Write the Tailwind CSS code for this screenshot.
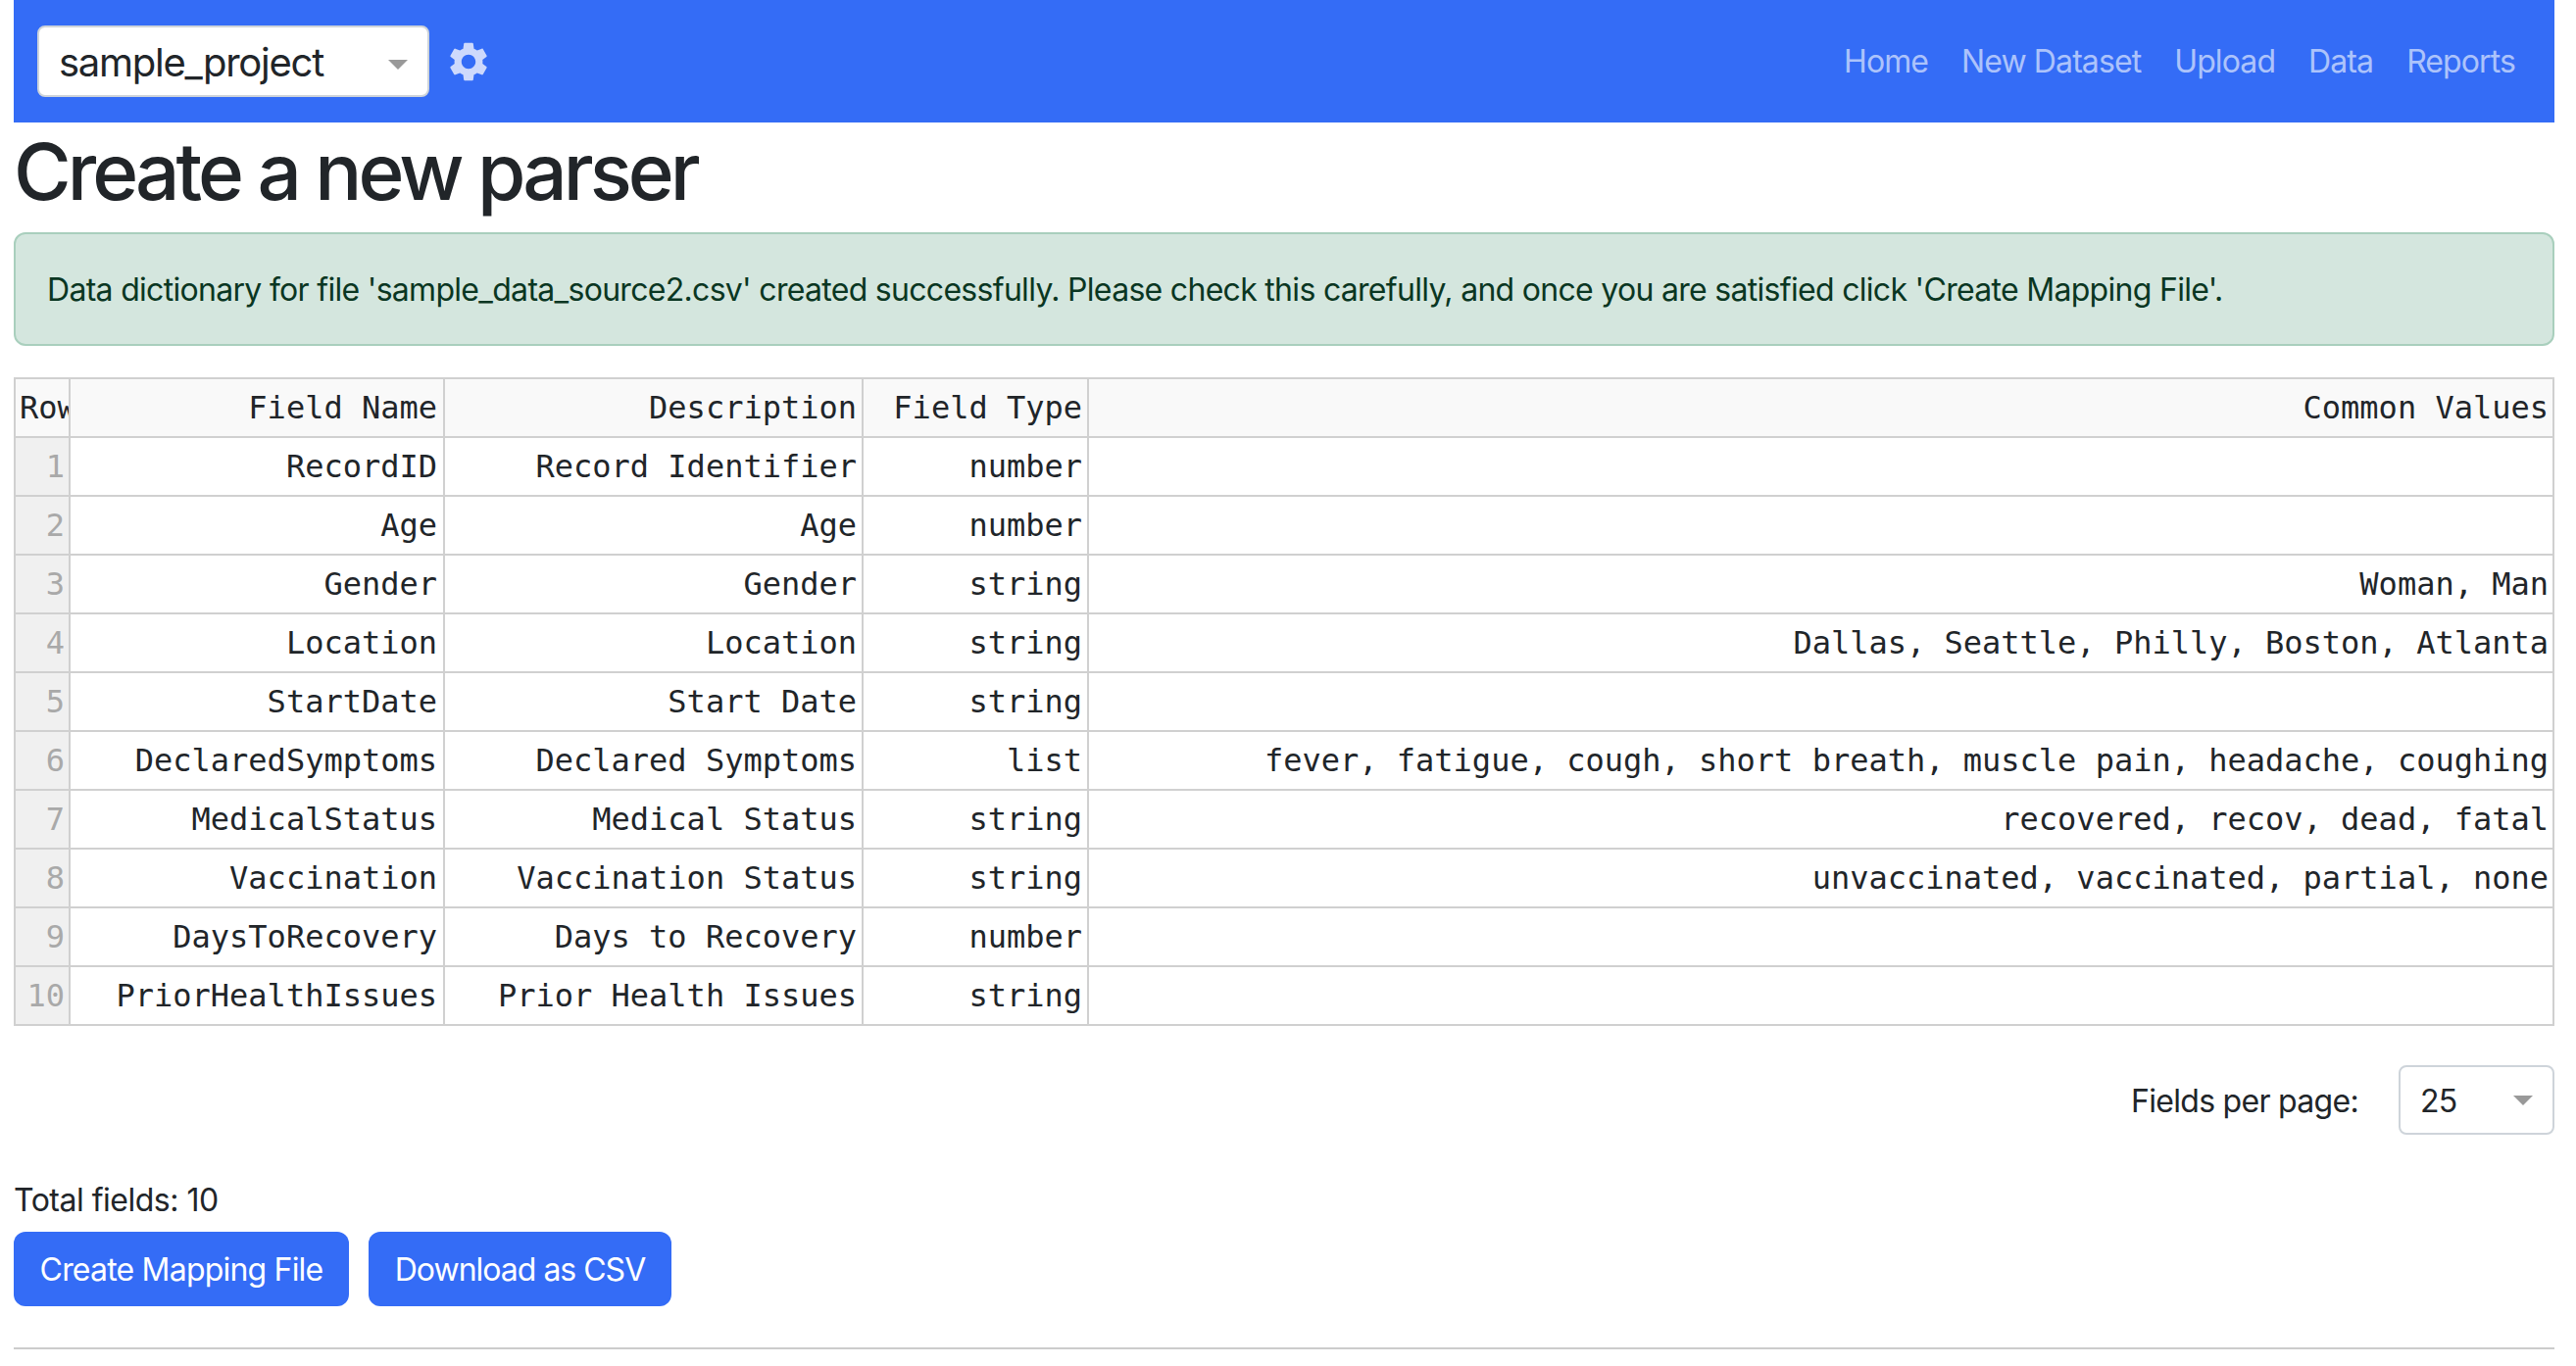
<!DOCTYPE html>
<html lang="en">
<head>
<meta charset="utf-8">
<title>Create a new parser</title>
<script src="https://cdn.jsdelivr.net/npm/@tailwindcss/browser@4"></script>
</head>
<body class="bg-white font-['Inter',sans-serif] text-[32px] leading-[48px] text-[#212529] tracking-[-0.7px]">
<div class="ml-[14px] mr-[22px]">
  <nav class="h-[125px] bg-[#346cf6] flex items-center pl-[24px] pr-[40px]">
    <div class="w-[400px] h-[73px] bg-white border-2 border-[#ced4da] rounded-[8px] flex items-center justify-between pl-[20px] pr-[20px] pt-[2px] text-[40px] tracking-[-1.25px] text-[#212529]">
      <span>sample_project</span>
      <svg class="w-[20px] h-[10px] mt-[4px]" viewBox="0 0 20 10"><polygon points="0,0 20,0 10,10" fill="#999999"/></svg>
    </div>
    <svg class="w-[48px] h-[48px] ml-[16px]" viewBox="0 0 24 24" fill="#cdd9fc"><path d="M19.14 12.94c.04-.3.06-.61.06-.94 0-.32-.02-.64-.07-.94l2.03-1.58c.18-.14.23-.41.12-.61l-1.92-3.32c-.12-.22-.37-.29-.59-.22l-2.39.96c-.5-.38-1.03-.7-1.62-.94l-.36-2.54c-.04-.24-.24-.41-.48-.41h-3.84c-.24 0-.43.17-.47.41l-.36 2.54c-.59.24-1.13.57-1.62.94l-2.39-.96c-.22-.08-.47 0-.59.22L2.74 8.87c-.12.21-.08.47.12.61l2.03 1.58c-.05.3-.09.63-.09.94s.02.64.07.94l-2.03 1.58c-.18.14-.23.41-.12.61l1.92 3.32c.12.22.37.29.59.22l2.39-.96c.5.38 1.03.7 1.62.94l.36 2.54c.05.24.24.41.48.41h3.84c.24 0 .44-.17.47-.41l.36-2.54c.59-.24 1.13-.56 1.62-.94l2.39.96c.22.08.47 0 .59-.22l1.92-3.32c.12-.22.07-.47-.12-.61l-2.01-1.58zM12 15.6c-1.98 0-3.6-1.62-3.6-3.6s1.62-3.6 3.6-3.6 3.6 1.62 3.6 3.6-1.62 3.6-3.6 3.6z"/></svg>
    <ul class="ml-auto flex gap-[34px] text-white/60 tracking-[-0.9px]">
      <li>Home</li>
      <li>New Dataset</li>
      <li>Upload</li>
      <li>Data</li>
      <li>Reports</li>
    </ul>
  </nav>

  <h1 class="text-[80px] leading-[96px] font-medium mt-[2px] mb-[14px] tracking-[-3.95px]">Create a new parser</h1>

  <div class="h-[116px] bg-[#d4e6de] border-2 border-[#a9cfbd] rounded-[12px] px-[32px] pt-[2px] flex items-center text-[#0a3622]">Data dictionary for file 'sample_data_source2.csv' created successfully. Please check this carefully, and once you are satisfied click 'Create Mapping File'.</div>

  <table class="mt-[32px] w-full table-fixed border-collapse font-['DejaVu_Sans_Mono',monospace] tracking-normal leading-[58px] text-right text-[#212529]">
    <colgroup><col class="w-[56px]"><col class="w-[382px]"><col class="w-[427px]"><col class="w-[230px]"><col></colgroup>
    <thead>
      <tr class="h-[60px] bg-[#f9f9f9]">
        <th class="font-normal border-2 border-[#d0d0d0] pl-[4px] text-left overflow-hidden whitespace-nowrap">Row</th>
        <th class="font-normal border-2 border-[#d0d0d0] pr-[6px]">Field Name</th>
        <th class="font-normal border-2 border-[#d0d0d0] pr-[5px]">Description</th>
        <th class="font-normal border-2 border-[#d0d0d0] pr-[5px]">Field Type</th>
        <th class="font-normal border-2 border-[#d0d0d0] pr-[4px]">Common Values</th>
      </tr>
    </thead>
    <tbody>
      <tr class="h-[60px]"><td class="border-2 border-[#d0d0d0] bg-[#f0f0f0] text-[#a9a9a9] pr-[4px]">1</td><td class="border-2 border-[#d0d0d0] pr-[6px]">RecordID</td><td class="border-2 border-[#d0d0d0] pr-[5px]">Record Identifier</td><td class="border-2 border-[#d0d0d0] pr-[5px]">number</td><td class="border-2 border-[#d0d0d0] pr-[4px]"></td></tr>
      <tr class="h-[60px]"><td class="border-2 border-[#d0d0d0] bg-[#f0f0f0] text-[#a9a9a9] pr-[4px]">2</td><td class="border-2 border-[#d0d0d0] pr-[6px]">Age</td><td class="border-2 border-[#d0d0d0] pr-[5px]">Age</td><td class="border-2 border-[#d0d0d0] pr-[5px]">number</td><td class="border-2 border-[#d0d0d0] pr-[4px]"></td></tr>
      <tr class="h-[60px]"><td class="border-2 border-[#d0d0d0] bg-[#f0f0f0] text-[#a9a9a9] pr-[4px]">3</td><td class="border-2 border-[#d0d0d0] pr-[6px]">Gender</td><td class="border-2 border-[#d0d0d0] pr-[5px]">Gender</td><td class="border-2 border-[#d0d0d0] pr-[5px]">string</td><td class="border-2 border-[#d0d0d0] pr-[4px]">Woman, Man</td></tr>
      <tr class="h-[60px]"><td class="border-2 border-[#d0d0d0] bg-[#f0f0f0] text-[#a9a9a9] pr-[4px]">4</td><td class="border-2 border-[#d0d0d0] pr-[6px]">Location</td><td class="border-2 border-[#d0d0d0] pr-[5px]">Location</td><td class="border-2 border-[#d0d0d0] pr-[5px]">string</td><td class="border-2 border-[#d0d0d0] pr-[4px]">Dallas, Seattle, Philly, Boston, Atlanta</td></tr>
      <tr class="h-[60px]"><td class="border-2 border-[#d0d0d0] bg-[#f0f0f0] text-[#a9a9a9] pr-[4px]">5</td><td class="border-2 border-[#d0d0d0] pr-[6px]">StartDate</td><td class="border-2 border-[#d0d0d0] pr-[5px]">Start Date</td><td class="border-2 border-[#d0d0d0] pr-[5px]">string</td><td class="border-2 border-[#d0d0d0] pr-[4px]"></td></tr>
      <tr class="h-[60px]"><td class="border-2 border-[#d0d0d0] bg-[#f0f0f0] text-[#a9a9a9] pr-[4px]">6</td><td class="border-2 border-[#d0d0d0] pr-[6px]">DeclaredSymptoms</td><td class="border-2 border-[#d0d0d0] pr-[5px]">Declared Symptoms</td><td class="border-2 border-[#d0d0d0] pr-[5px]">list</td><td class="border-2 border-[#d0d0d0] pr-[4px]">fever, fatigue, cough, short breath, muscle pain, headache, coughing</td></tr>
      <tr class="h-[60px]"><td class="border-2 border-[#d0d0d0] bg-[#f0f0f0] text-[#a9a9a9] pr-[4px]">7</td><td class="border-2 border-[#d0d0d0] pr-[6px]">MedicalStatus</td><td class="border-2 border-[#d0d0d0] pr-[5px]">Medical Status</td><td class="border-2 border-[#d0d0d0] pr-[5px]">string</td><td class="border-2 border-[#d0d0d0] pr-[4px]">recovered, recov, dead, fatal</td></tr>
      <tr class="h-[60px]"><td class="border-2 border-[#d0d0d0] bg-[#f0f0f0] text-[#a9a9a9] pr-[4px]">8</td><td class="border-2 border-[#d0d0d0] pr-[6px]">Vaccination</td><td class="border-2 border-[#d0d0d0] pr-[5px]">Vaccination Status</td><td class="border-2 border-[#d0d0d0] pr-[5px]">string</td><td class="border-2 border-[#d0d0d0] pr-[4px]">unvaccinated, vaccinated, partial, none</td></tr>
      <tr class="h-[60px]"><td class="border-2 border-[#d0d0d0] bg-[#f0f0f0] text-[#a9a9a9] pr-[4px]">9</td><td class="border-2 border-[#d0d0d0] pr-[6px]">DaysToRecovery</td><td class="border-2 border-[#d0d0d0] pr-[5px]">Days to Recovery</td><td class="border-2 border-[#d0d0d0] pr-[5px]">number</td><td class="border-2 border-[#d0d0d0] pr-[4px]"></td></tr>
      <tr class="h-[60px]"><td class="border-2 border-[#d0d0d0] bg-[#f0f0f0] text-[#a9a9a9] pr-[4px]">10</td><td class="border-2 border-[#d0d0d0] pr-[6px]">PriorHealthIssues</td><td class="border-2 border-[#d0d0d0] pr-[5px]">Prior Health Issues</td><td class="border-2 border-[#d0d0d0] pr-[5px]">string</td><td class="border-2 border-[#d0d0d0] pr-[4px]"></td></tr>
    </tbody>
  </table>

  <div class="mt-[40px] flex items-center justify-end gap-[41px]">
    <span class="pt-[2px]">Fields per page:</span>
    <div class="w-[159px] h-[71px] border-2 border-[#ced4da] rounded-[8px] flex items-center justify-between pl-[20px] pr-[20px]">
      <span class="pt-[2px]">25</span>
      <svg class="w-[20px] h-[10px]" viewBox="0 0 20 10"><polygon points="0,0 20,0 10,10" fill="#999999"/></svg>
    </div>
  </div>

  <p class="mt-[43px] tracking-[-0.5px]">Total fields: 10</p>
  <div class="mt-[8px] flex gap-[20px]">
    <button class="h-[76px] w-[342px] bg-[#346cf6] text-white rounded-[12px] pt-[2px] tracking-[-0.8px]">Create Mapping File</button>
    <button class="h-[76px] w-[309px] bg-[#346cf6] text-white rounded-[12px] pt-[2px] tracking-[-1px]">Download as CSV</button>
  </div>
  <hr class="mt-[42px] border-t-2 border-[#cccccc]">
</div>
</body>
</html>
